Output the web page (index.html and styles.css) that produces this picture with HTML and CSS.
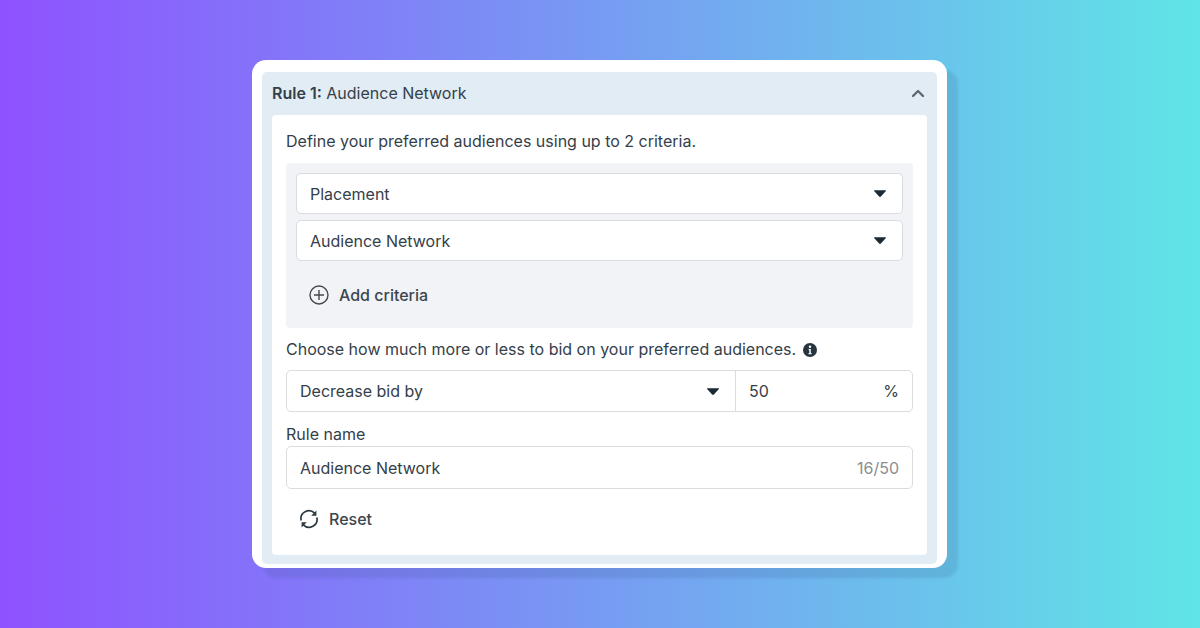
FILE: index.html
```html
<!DOCTYPE html>
<html lang="en">
<head>
  <meta charset="UTF-8">
  <meta name="viewport" content="width=device-width, initial-scale=1.0">
  <title>Audience rule</title>
  <link rel="stylesheet" href="styles.css">
</head>
<body>
  <div class="card">
    <div class="rule">
      <div class="rule-header">
        <span class="rule-title"><b>Rule 1:</b> Audience Network</span>
        <svg class="chevron" width="14" height="9" viewBox="0 0 14 9"><path d="M2 7l5-5 5 5" fill="none" stroke="#606770" stroke-width="2.4" stroke-linecap="round" stroke-linejoin="round"/></svg>
      </div>
      <div class="panel">
        <p class="intro">Define your preferred audiences using up to 2 criteria.</p>
        <div class="criteria">
          <div class="select">
            <span>Placement</span>
            <svg class="caret" width="14" height="9" viewBox="0 0 14 9"><path d="M1.5 1.2h11q.9 0 .4.8l-5 5.6q-.9.9-1.8 0l-5-5.6q-.5-.8.4-.8z" fill="#1c2b33"/></svg>
          </div>
          <div class="select">
            <span>Audience Network</span>
            <svg class="caret" width="14" height="9" viewBox="0 0 14 9"><path d="M1.5 1.2h11q.9 0 .4.8l-5 5.6q-.9.9-1.8 0l-5-5.6q-.5-.8.4-.8z" fill="#1c2b33"/></svg>
          </div>
          <div class="add-criteria">
            <svg width="20" height="20" viewBox="0 0 20 20"><circle cx="10" cy="10" r="9" fill="none" stroke="#444950" stroke-width="1.4"/><path d="M10 5v10M5 10h10" stroke="#444950" stroke-width="1.4"/></svg>
            <span>Add criteria</span>
          </div>
        </div>
        <p class="bid-label">Choose how much more or less to bid on your preferred audiences.
          <svg class="info" width="14" height="14" viewBox="0 0 14 14"><circle cx="7" cy="7" r="7" fill="#283540"/><circle cx="7" cy="3.7" r="1.2" fill="#fff"/><path d="M5.6 6h2.2v4.2h.9v1H5.4v-1h.9V7h-.7z" fill="#fff"/></svg>
        </p>
        <div class="bid-group">
          <div class="bid-type">
            <span>Decrease bid by</span>
            <svg class="caret" width="14" height="9" viewBox="0 0 14 9"><path d="M1.5 1.2h11q.9 0 .4.8l-5 5.6q-.9.9-1.8 0l-5-5.6q-.5-.8.4-.8z" fill="#1c2b33"/></svg>
          </div>
          <div class="bid-value">
            <span>50</span>
            <span>%</span>
          </div>
        </div>
        <label class="name-label">Rule name</label>
        <div class="name-input">
          <span>Audience Network</span>
          <span class="count">16/50</span>
        </div>
        <div class="reset">
          <svg width="20" height="20" viewBox="0 0 20 20"><path d="M2.2 11.5A7.9 7.9 0 0 1 15.6 4.2M17.8 8.5A7.9 7.9 0 0 1 4.4 15.8" fill="none" stroke="#2f3a42" stroke-width="1.7"/><path d="M17.4 1.6v5.2h-5.2zM2.6 18.4v-5.2h5.2z" fill="#2f3a42"/></svg>
          <span>Reset</span>
        </div>
      </div>
    </div>
  </div>
</body>
</html>
```

FILE: styles.css
```css
* {
  box-sizing: border-box;
}

body {
  margin: 0;
  width: 1200px;
  height: 628px;
  overflow: hidden;
  background: linear-gradient(90deg, #8f52ff 0%, #5fe5e6 100%);
  color: #344049;
  font-family: Inter, "Liberation Sans", sans-serif;
  font-size: 16px;
  padding: 60px 0 0 252px;
}

.card {
  width: 695px;
  height: 508px;
  background-color: #ffffff;
  border-radius: 14px;
  padding: 12px 10px 4px;
  box-shadow: 11px 10px 3px rgba(40, 70, 120, 0.14);
}

.rule {
  height: 100%;
  background-color: #e2ecf4;
  border-radius: 5px;
  padding: 0 10px 9px;
  display: flex;
  flex-direction: column;
}

.rule-header {
  height: 43px;
  flex: none;
  display: flex;
  align-items: center;
  justify-content: space-between;
  padding-right: 2px;
  padding-bottom: 1px;
}

.rule-title b {
  font-weight: 600;
}

.panel {
  flex: 1;
  background-color: #ffffff;
  border-radius: 4px;
  padding: 14px 14px 0;
}

.intro {
  margin: 0;
  height: 34px;
  line-height: 24px;
}

.criteria {
  height: 165px;
  background-color: #f1f3f6;
  border-radius: 4px;
  padding: 10px;
}

.select {
  height: 41px;
  margin-bottom: 6px;
  background-color: #ffffff;
  border: 1px solid #d9dce1;
  border-radius: 5px;
  padding: 0 15px 0 13px;
  display: flex;
  align-items: center;
  justify-content: space-between;
}

.add-criteria {
  display: flex;
  align-items: center;
  gap: 10px;
  padding: 10px 0 0 13px;
  height: 46px;
  font-weight: 500;
  color: #3c464e;
}

.bid-label {
  margin: 9px 0 9px;
  line-height: 24px;
}

.info {
  vertical-align: -2px;
  margin-left: 2px;
}

.bid-group {
  height: 42px;
  display: flex;
  background-color: #ffffff;
  border: 1px solid #d9dce1;
  border-radius: 5px;
}

.bid-type {
  width: 449px;
  border-right: 1px solid #d9dce1;
  padding: 0 15px 0 13px;
  display: flex;
  align-items: center;
  justify-content: space-between;
}

.bid-value {
  flex: 1;
  padding: 0 13px;
  display: flex;
  align-items: center;
  justify-content: space-between;
}

.name-label {
  display: block;
  margin-top: 9px;
  height: 24px;
  line-height: 26px;
}

.name-input {
  height: 43px;
  margin-top: 1px;
  border: 1px solid #d9dce1;
  border-radius: 5px;
  padding: 0 13px;
  display: flex;
  align-items: center;
  justify-content: space-between;
}

.count {
  color: #8a8d91;
}

.reset {
  display: flex;
  align-items: center;
  gap: 10px;
  padding: 0 0 0 13px;
  height: 60px;
  font-weight: 500;
  color: #3c464e;
}
```
